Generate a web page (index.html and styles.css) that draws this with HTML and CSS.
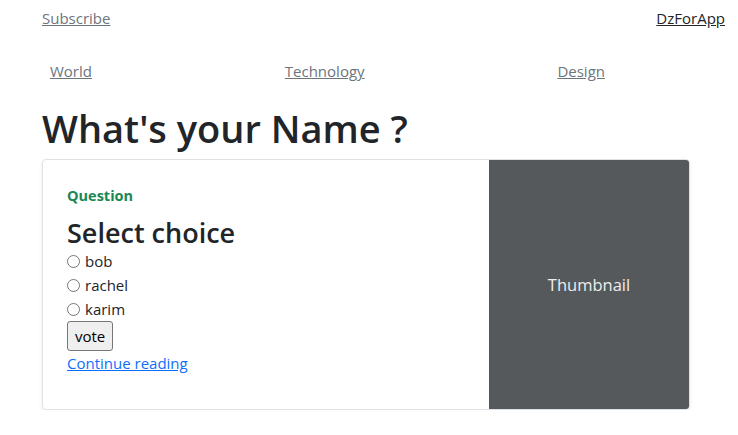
FILE: index.html
```html
<!DOCTYPE html>
<html lang="en">
<head>
<meta charset="utf-8">
<title>What's your Name ?</title>
<link rel="stylesheet" href="styles.css">
</head>
<body>
<header class="top">
  <a class="subscribe" href="#">Subscribe</a>
  <a class="brand" href="#">DzForApp</a>
</header>
<nav class="nav">
  <a class="nav-link" href="#">World</a>
  <a class="nav-link" href="#">Technology</a>
  <a class="nav-link" href="#">Design</a>
</nav>
<main class="main">
  <h1 class="title">What's your Name ?</h1>
  <div class="card">
    <div class="card-body">
      <strong class="kicker">Question</strong>
      <h3 class="card-title">Select choice</h3>
      <form class="choices">
        <label class="choice"><input type="radio" name="c" class="radio"> bob</label>
        <label class="choice"><input type="radio" name="c" class="radio"> rachel</label>
        <label class="choice"><input type="radio" name="c" class="radio"> karim</label>
        <button type="button" class="vote">vote</button>
      </form>
      <a class="more" href="#">Continue reading</a>
    </div>
    <div class="thumb">Thumbnail</div>
  </div>
</main>
</body>
</html>
```
FILE: styles.css
```css
* { box-sizing: border-box; }
body {
  margin: 0;
  font-family: "Open Sans", "Noto Sans", sans-serif;
  font-size: 15px;
  line-height: 24px;
  color: #212529;
  background: #fff;
}
.top {
  display: flex;
  justify-content: space-between;
  padding: 6px 13px 0 42px;
}
.subscribe { color: #6c757d; }
.brand { color: #212529; }
.nav {
  display: flex;
  justify-content: space-between;
  width: 571px;
  margin: 21px 0 0 42px;
}
.nav-link {
  color: #6c757d;
  padding: 8px;
}
.main { padding-left: 42px; }
.title {
  margin: 13px 0 7px;
  font-size: 38px;
  line-height: 48px;
  font-weight: 600;
}
.card {
  display: flex;
  width: 648px;
  height: 251px;
  border: 1px solid #dee2e6;
  border-radius: 4px;
  box-shadow: 0 2px 4px rgba(0,0,0,0.075);
  overflow: hidden;
}
.card-body {
  flex: 1;
  padding: 24px;
  display: flex;
  flex-direction: column;
  align-items: flex-start;
}
.kicker {
  color: #198754;
  font-size: 14.5px;
  font-weight: 700;
  margin-bottom: 8px;
}
.card-title {
  margin: 0;
  font-size: 27px;
  line-height: 33px;
  font-weight: 600;
}
.choices {
  display: flex;
  flex-direction: column;
  align-items: flex-start;
}
.choice {
  display: flex;
  align-items: center;
  height: 24px;
}
.radio {
  margin: 0 5px 0 0;
  width: 13px;
  height: 13px;
}
.vote {
  font-family: inherit;
  font-size: 15px;
  line-height: 22px;
  padding: 3px 7px;
  border: 1px solid #767676;
  border-radius: 3px;
  background: #efefef;
  color: #000;
}
.more { color: #0d6efd; }
.thumb {
  width: 200px;
  background: #55595c;
  color: #eceeef;
  display: flex;
  align-items: center;
  justify-content: center;
  font-size: 16.5px;
}
```
